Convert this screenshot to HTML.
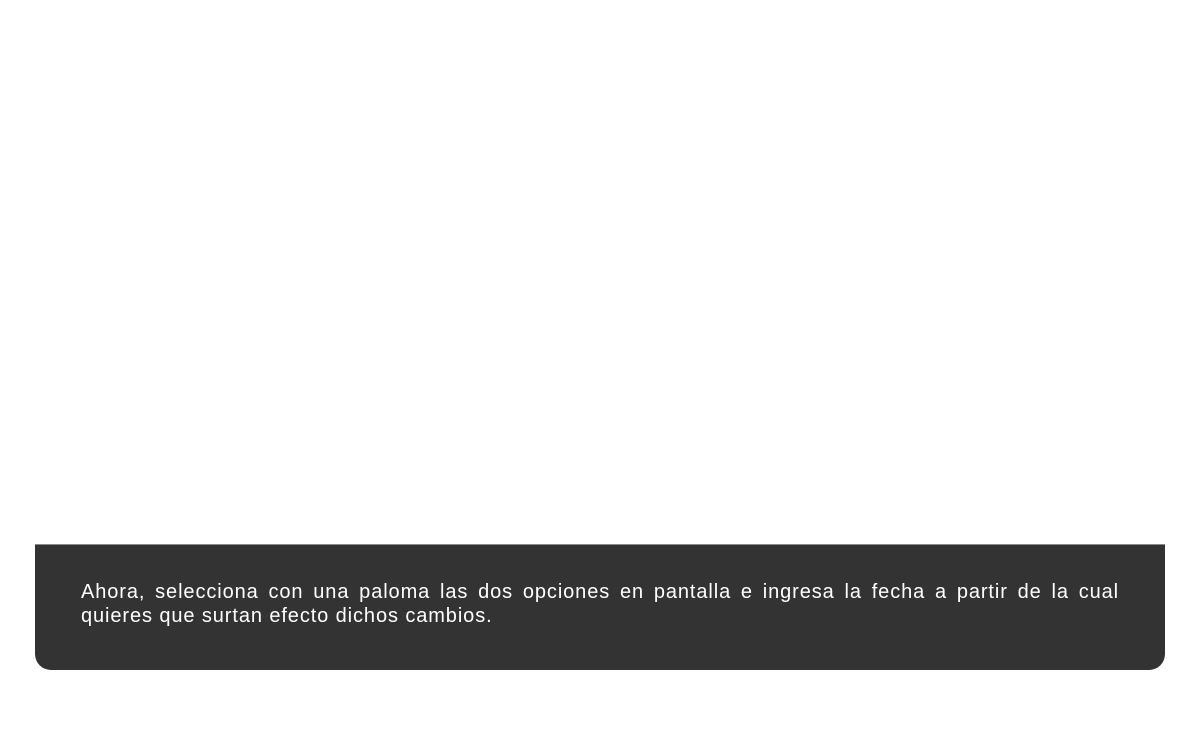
<!DOCTYPE html>
<html><head><meta charset="utf-8"><style>
html,body{margin:0;padding:0;background:#fff;width:1200px;height:750px;overflow:hidden}
.box{position:absolute;left:35px;top:544px;width:1130px;height:126px;background:#333333;border-radius:0 0 16px 16px;border-top:1px solid #888;box-sizing:border-box}
.t{position:absolute;left:46px;top:35px;width:1038px;color:#fff;font-family:"Liberation Sans",sans-serif;font-size:20px;line-height:24px;text-align:justify;letter-spacing:0.9px}
</style></head><body>
<div class="box"><div class="t">Ahora, selecciona con una paloma las dos opciones en pantalla e ingresa la fecha a partir de la cual quieres que surtan efecto dichos cambios.</div></div>
</body></html>
